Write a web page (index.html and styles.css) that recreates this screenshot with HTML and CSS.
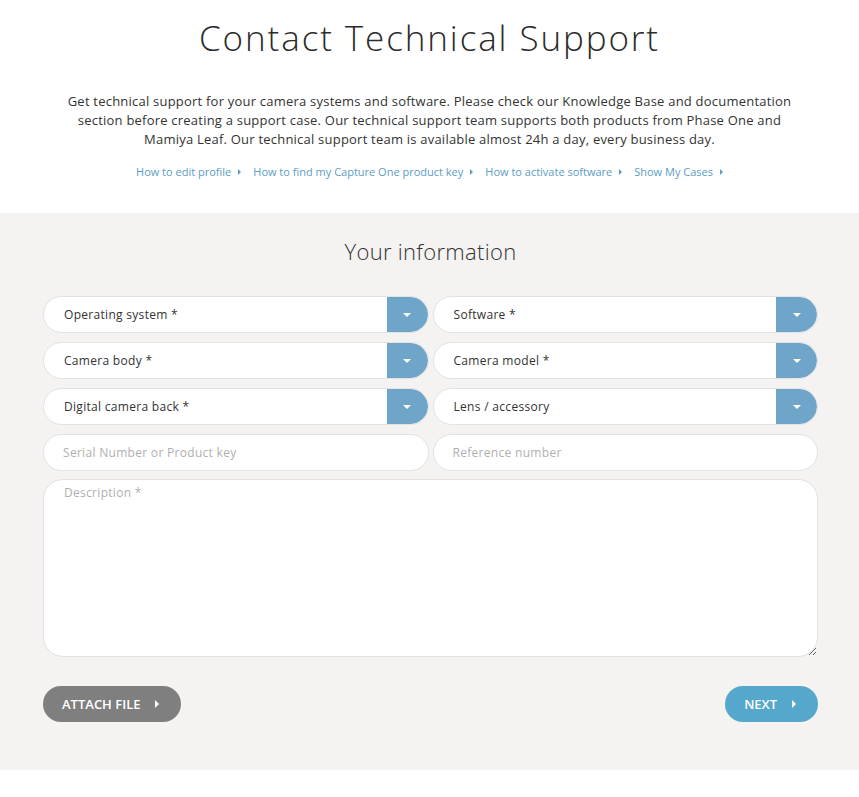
FILE: index.html
```html
<!DOCTYPE html>
<html lang="en">
<head>
  <meta charset="UTF-8" />
  <meta name="viewport" content="width=device-width, initial-scale=1.0"/>
  <title>Contact Technical Support</title>
  <link rel="stylesheet" href="styles.css">
</head>
<body>

  <div class="intro">
    <h1>Contact Technical Support</h1>
    <p>Get technical support for your camera systems and software. Please check our Knowledge Base and documentation section before creating a support case. Our technical support team supports both products from Phase One and Mamiya Leaf. Our technical support team is available almost 24h a day, every business day.</p>
    <div class="links">
      <a href="#">How to edit profile</a>
      <a href="#">How to find my Capture One product key</a>
      <a href="#">How to activate software</a>
      <a href="#">Show My Cases</a>
    </div>
  </div>

  <div class="form-section">
    <h2>Your information</h2>

    <div class="form-grid">
      <div class="select"><span>Operating system *</span><span class="handle"></span></div>
      <div class="select"><span>Software *</span><span class="handle"></span></div>
      <div class="select"><span>Camera body *</span><span class="handle"></span></div>
      <div class="select"><span>Camera model *</span><span class="handle"></span></div>
      <div class="select"><span>Digital camera back *</span><span class="handle"></span></div>
      <div class="select"><span>Lens / accessory</span><span class="handle"></span></div>
      <input class="field" type="text" placeholder="Serial Number or Product key" />
      <input class="field" type="text" placeholder="Reference number" />
    </div>

    <textarea class="description" placeholder="Description *"></textarea>

    <div class="actions">
      <button class="btn btn-grey">ATTACH FILE</button>
      <button class="btn btn-blue">NEXT</button>
    </div>
  </div>

</body>
</html>
```

FILE: styles.css
```css
body {
  margin: 0;
  background: #fff;
  font-family: "Open Sans", "Lato", sans-serif;
  color: #333;
}
.intro {
  text-align: center;
  padding: 17px 60px 0;
  height: 213px;
  box-sizing: border-box;
}
h1 {
  font-weight: 300;
  font-size: 35px;
  letter-spacing: 1.9px;
  margin: 0;
  line-height: 42px;
  color: #2b2b2b;
}
.intro p {
  font-size: 13px;
  letter-spacing: 0.22px;
  line-height: 19px;
  margin: 33px auto 0;
  max-width: 735px;
  color: #333;
}
.links {
  margin-top: 15px;
  display: flex;
  justify-content: center;
  gap: 12px;
  font-size: 11px;
}
.links a {
  color: #5b9dc6;
  text-decoration: none;
}
.links a::after {
  content: "";
  display: inline-block;
  margin-left: 7px;
  border-left: 3px solid #5b9dc6;
  border-top: 3px solid transparent;
  border-bottom: 3px solid transparent;
  vertical-align: 1px;
}
.form-section {
  background: #f4f3f2;
  padding: 26px 41px 48px 43px;
}
h2 {
  font-weight: 300;
  font-size: 22px;
  letter-spacing: 0.3px;
  text-align: center;
  margin: 0 0 33px;
  line-height: 24px;
  color: #333;
}
.form-grid {
  display: grid;
  grid-template-columns: 1fr 1fr;
  column-gap: 4px;
  row-gap: 9px;
}
.select, .field {
  box-sizing: border-box;
  height: 37px;
  background: #fff;
  border: 1px solid #e2e2e2;
  border-radius: 19px;
  font-family: "Open Sans", sans-serif;
  font-size: 12px;
  letter-spacing: 0.3px;
}
.select {
  display: flex;
  align-items: center;
  justify-content: space-between;
  padding-left: 20px;
  overflow: hidden;
  color: #333;
}
.handle {
  width: 41px;
  height: 100%;
  background: #6fa5c9;
  border-radius: 0 19px 19px 0;
  display: flex;
  align-items: center;
  justify-content: center;
}
.handle::before {
  content: "";
  border-top: 4px solid #fff;
  border-left: 4px solid transparent;
  border-right: 4px solid transparent;
}
.field {
  padding: 0 19px;
  color: #333;
  outline: none;
  width: 100%;
}
.field::placeholder, .description::placeholder {
  color: #b0b0b0;
}
.description {
  display: block;
  box-sizing: border-box;
  width: 100%;
  height: 178px;
  margin-top: 8px;
  border: 1px solid #e2e2e2;
  border-radius: 20px;
  padding: 4px 20px;
  font-family: "Open Sans", sans-serif;
  font-size: 12px;
  letter-spacing: 0.3px;
  background: #fff;
  outline: none;
}
.actions {
  display: flex;
  justify-content: space-between;
  margin-top: 29px;
}
.btn {
  height: 36px;
  border: none;
  border-radius: 18px;
  color: #fff;
  font-family: "Open Sans", sans-serif;
  font-size: 13px;
  font-weight: 600;
  padding: 0 22px 0 19px;
  cursor: pointer;
}
.btn::after {
  content: "";
  display: inline-block;
  margin-left: 15px;
  border-left: 4px solid #fff;
  border-top: 4px solid transparent;
  border-bottom: 4px solid transparent;
  vertical-align: 1px;
}
.btn-grey {
  background: #7f7f7f;
}
.btn-blue {
  background: #55a7cc;
}
```
